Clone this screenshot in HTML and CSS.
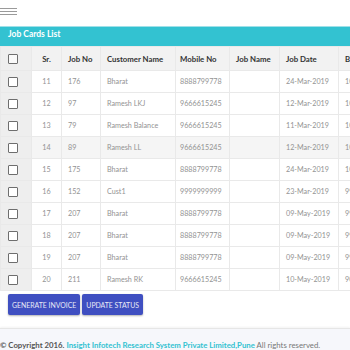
FILE: index.html
```html
<!DOCTYPE html>
<html>
<head>
<meta charset="utf-8">
<link rel="stylesheet" href="styles.css">
</head>
<body>
<div class="topbar">
  <div class="burger"><span></span><span></span><span></span></div>
</div>
<div class="card">
  <div class="card-head">Job Cards List</div>
  <div class="table-wrap">
    <table class="grid">
      <colgroup>
        <col class="c-chk"><col class="c-sr"><col class="c-job"><col class="c-cust"><col class="c-mob"><col class="c-name"><col class="c-date"><col class="c-b">
      </colgroup>
      <thead>
        <tr><th class="chk"><span class="box"></span></th><th class="sr">Sr.</th><th>Job No</th><th>Customer Name</th><th>Mobile No</th><th>Job Name</th><th>Job Date</th><th>Bill Date</th></tr>
      </thead>
      <tbody>
        <tr><td class="chk"><span class="box"></span></td><td class="sr">11</td><td>176</td><td>Bharat</td><td>8888799778</td><td></td><td>24-Mar-2019</td><td>10-Mar-2019</td></tr>
        <tr><td class="chk"><span class="box"></span></td><td class="sr">12</td><td>97</td><td>Ramesh LKJ</td><td>9666615245</td><td></td><td>12-Mar-2019</td><td>10-Mar-2019</td></tr>
        <tr><td class="chk"><span class="box"></span></td><td class="sr">13</td><td>79</td><td>Ramesh Balance</td><td>9666615245</td><td></td><td>11-Mar-2019</td><td>10-Mar-2019</td></tr>
        <tr class="hover"><td class="chk"><span class="box"></span></td><td class="sr">14</td><td>89</td><td>Ramesh LL</td><td>9666615245</td><td></td><td>12-Mar-2019</td><td>10-Mar-2019</td></tr>
        <tr><td class="chk"><span class="box"></span></td><td class="sr">15</td><td>175</td><td>Bharat</td><td>8888799778</td><td></td><td>24-Mar-2019</td><td>10-Mar-2019</td></tr>
        <tr><td class="chk"><span class="box"></span></td><td class="sr">16</td><td>152</td><td>Cust1</td><td>9999999999</td><td></td><td>23-Mar-2019</td><td>99-Mar-2019</td></tr>
        <tr><td class="chk"><span class="box"></span></td><td class="sr">17</td><td>207</td><td>Bharat</td><td>8888799778</td><td></td><td>09-May-2019</td><td>99-May-2019</td></tr>
        <tr><td class="chk"><span class="box"></span></td><td class="sr">18</td><td>207</td><td>Bharat</td><td>8888799778</td><td></td><td>09-May-2019</td><td>99-May-2019</td></tr>
        <tr><td class="chk"><span class="box"></span></td><td class="sr">19</td><td>207</td><td>Bharat</td><td>8888799778</td><td></td><td>09-May-2019</td><td>99-May-2019</td></tr>
        <tr><td class="chk"><span class="box"></span></td><td class="sr">20</td><td>211</td><td>Ramesh RK</td><td>9666615245</td><td></td><td>10-May-2019</td><td>90-May-2019</td></tr>
      </tbody>
    </table>
  </div>
  <div class="actions">
    <button class="btn">GENERATE INVOICE</button>
    <button class="btn">UPDATE STATUS</button>
  </div>
</div>
<footer class="foot">
  <b>© Copyright 2016.</b> <a class="link">Insight Infotech Research System Private Limited,Pune</a> All rights reserved.
</footer>
</body>
</html>
```

FILE: styles.css
```css
html, body {
  margin: 0;
  padding: 0;
  background: #ffffff;
  font-family: Lato, "Open Sans", sans-serif;
  overflow: hidden;
  width: 350px;
  height: 350px;
}
.topbar {
  height: 26px;
  display: flex;
  align-items: flex-start;
}
.burger {
  margin-top: 8px;
  width: 17px;
  display: flex;
  flex-direction: column;
  gap: 2px;
}
.burger span {
  display: block;
  height: 1px;
  background: #9a9a9a;
}
.card {
  width: 100%;
}
.card-head {
  background: #33c2d1;
  border-top: 1px solid #9fe0e8;
  height: 19px;
  color: #ffffff;
  font-weight: 700;
  font-size: 8.5px;
  padding-left: 8px;
  line-height: 15px;
}
.table-wrap {
  width: 350px;
  overflow: hidden;
}
.grid {
  border-collapse: collapse;
  table-layout: fixed;
  width: 420px;
  font-size: 7.2px;
}
.c-chk { width: 31px; }
.c-sr { width: 30px; }
.c-job { width: 39px; }
.c-cust { width: 75px; }
.c-mob { width: 54px; }
.c-name { width: 50px; }
.c-date { width: 59px; }
.c-b { width: 82px; }
.grid th, .grid td {
  border: 1px solid #e9e9e9;
  text-align: left;
  padding: 0 6px;
  white-space: nowrap;
  overflow: hidden;
}
.grid th {
  background: #f2f2f2;
  height: 23px;
  font-weight: 700;
  color: #333333;
  font-size: 7.8px;
}
.grid td {
  height: 21px;
  color: #939393;
}
.grid .sr { text-align: center; padding: 0; }
.grid .chk {
  background: #eeeeee;
  padding: 0 0 0 7px;
}
.grid td:nth-child(5) { padding-left: 4px; }
.grid th:nth-child(5) { padding-left: 4px; }
.grid tr.hover td { background: #f5f5f5; }
.grid tr.hover td.chk { background: #eeeeee; }
.box {
  display: block;
  width: 8px;
  height: 8px;
  border: 1.5px solid #6e6e6e;
  border-radius: 1px;
  background: #ffffff;
}
.grid th .box { background: #f9f9f9; }
.actions {
  display: flex;
  gap: 2px;
  padding: 3px 8px 0 8px;
  height: 34px;
}
.btn {
  background: #3f4fc1;
  color: #e8eaf6;
  border: none;
  border-radius: 2px;
  font-family: Lato, "Open Sans", sans-serif;
  font-size: 6.9px;
  height: 21px;
  padding: 0 4px;
  box-shadow: 0 1px 2px rgba(0,0,0,0.3);
}
.foot {
  background: #f6f7fb;
  border-top: 1px solid #e6e6e6;
  box-shadow: 0 -1px 2px rgba(0,0,0,0.05);
  height: 30px;
  font-size: 7.8px;
  color: #777777;
  line-height: 33px;
  white-space: nowrap;
}
.foot b { color: #555555; }
.link { color: #33c2d1; font-weight: 700; }
```
